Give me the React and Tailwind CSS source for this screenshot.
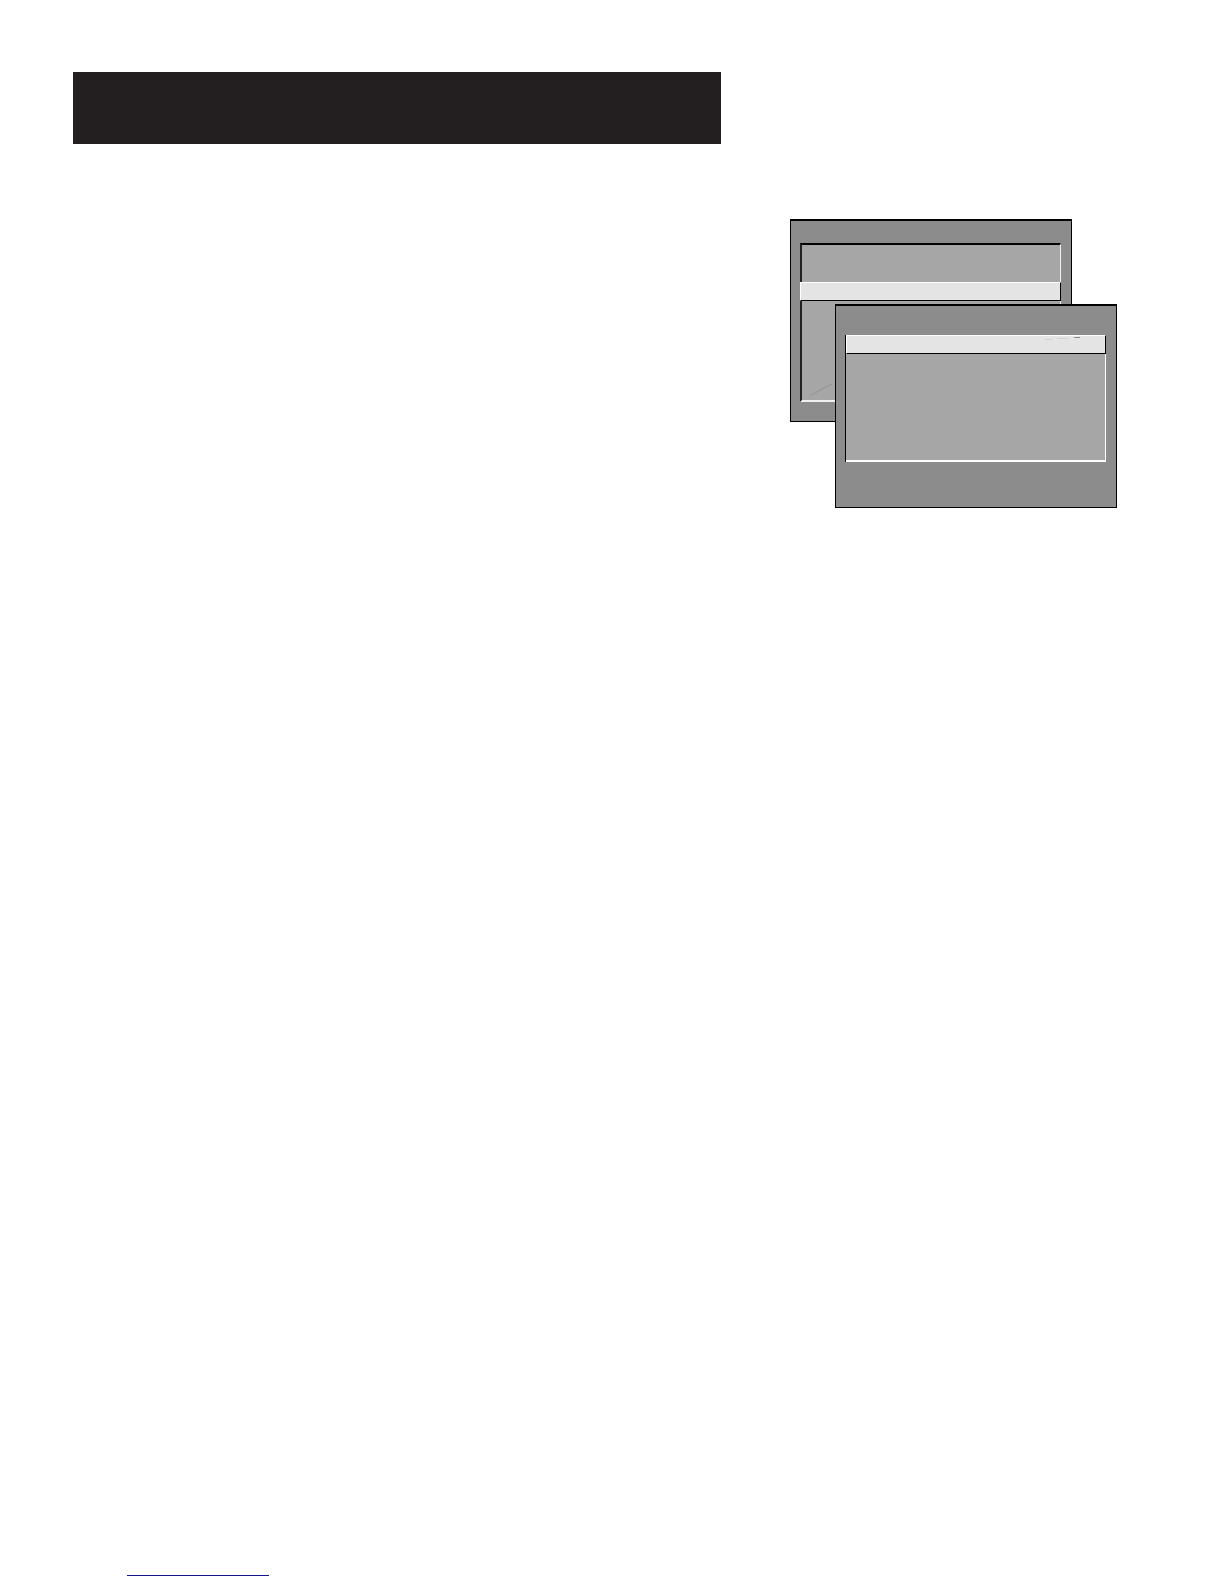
import React from 'react'

// Gray menu window with a sunken list panel inside
function MenuWindow({ className, children }) {
  return (
    <section className={`w-[282px] border border-t-2 border-black bg-[#8c8c8c] ${className}`}>
      {children}
    </section>
  )
}

function SelectedRow({ children }) {
  return (
    <div className="h-[19px] border border-t-white border-l-white border-r-black border-b-black bg-[#e4e4e4]">
      {children}
    </div>
  )
}

function BackWindow() {
  return (
    <MenuWindow className="h-[203px] pt-[22px] pr-[10px] pb-[19px] pl-[9px]">
      <div className="flex h-full flex-col bg-[#a6a6a6]">
        <div className="h-[39px] border-t-2 border-r border-l-2 border-t-black border-r-[#f0f0f0] border-l-[#222222]" />
        <SelectedRow />
        <div className="flex flex-1 flex-col justify-end border-r border-b-2 border-l-2 border-r-[#f0f0f0] border-b-[#f0f0f0] border-l-[#222222]">
          <svg className="mb-1 ml-2 block h-3 w-[24px]" viewBox="0 0 24 12" fill="none" stroke="#929292">
            <path d="M0 11.5 6 8.5 12 5 18 2 22 0" />
          </svg>
        </div>
      </div>
    </MenuWindow>
  )
}

function FrontWindow() {
  return (
    <MenuWindow className="relative -mt-[118px] ml-[45px] h-[204px] pt-[29px] pr-[10px] pb-[45px] pl-[9px]">
      <div className="flex h-full flex-col border-l border-black bg-[#a6a6a6]">
        <SelectedRow>
          <svg className="mr-3 ml-auto block h-1 w-[48px]" viewBox="0 0 48 4" fill="none">
            <path d="M0 3.5H8" stroke="#d2d2d2" />
            <path d="M12 2.5H24" stroke="#d2d2d2" />
            <path d="M29 1.5H35" stroke="#8a8a8a" />
          </svg>
        </SelectedRow>
        <div className="flex-1 border-r border-b-2 border-white" />
      </div>
    </MenuWindow>
  )
}

export default function App() {
  return (
    <main className="flex min-h-screen flex-col bg-white pt-[72px] pb-2">
      <header className="mx-[73px]">
        <div className="h-[72px] w-full max-w-[648px] bg-[#231f20]" />
      </header>

      <div className="mt-[75px] mr-[107px] ml-auto w-[327px]">
        <BackWindow />
        <FrontWindow />
      </div>

      <footer className="mt-auto pl-[127px]">
        <div className="h-px w-[142px] bg-[#14148c]" />
      </footer>
    </main>
  )
}
